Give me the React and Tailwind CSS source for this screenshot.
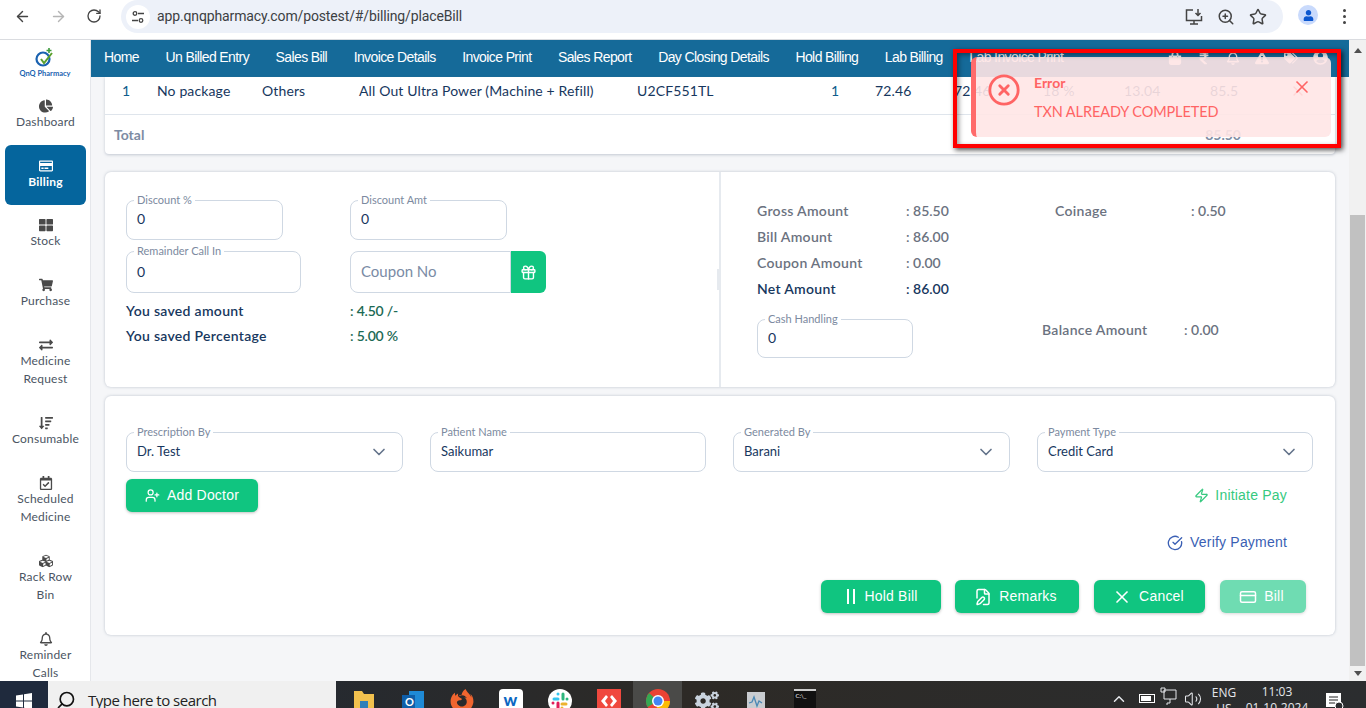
import { ArrowLeft, ArrowRight, RotateCw, Star, Search, ZoomIn, X, CircleX, ChevronDown, Gift, UserPlus, Zap, CircleCheckBig, FileEdit, CreditCard, ChevronUp, Volume2 } from 'lucide-react';
import { FaChartPie, FaRegCreditCard, FaThLarge, FaShoppingCart, FaExchangeAlt, FaSortAmountDown, FaRegCalendarCheck, FaCubes, FaRegBell, FaShoppingBag, FaRupeeSign, FaExclamationTriangle, FaTags, FaUserCircle, FaUser, FaFirefoxBrowser, FaCogs } from 'react-icons/fa';

const sideItems = [
    { icon: FaThLarge, lines: ['Stock'] },
    { icon: FaShoppingCart, lines: ['Purchase'] },
    { icon: FaExchangeAlt, lines: ['Medicine', 'Request'] },
    { icon: FaSortAmountDown, lines: ['Consumable'] },
    { icon: FaRegCalendarCheck, lines: ['Scheduled', 'Medicine'] },
    { icon: FaCubes, lines: ['Rack Row', 'Bin'] },
    { icon: FaRegBell, lines: ['Reminder', 'Calls'] },
];

const navItems = ['Home', 'Un Billed Entry', 'Sales Bill', 'Invoice Details', 'Invoice Print', 'Sales Report', 'Day Closing Details', 'Hold Billing', 'Lab Billing', 'Lab Invoice Print'];

const SideItem = ({ icon: Icon, lines, active }) => (
    <div className={`mx-[5px] w-[81px] flex flex-col items-center pt-[13px] pb-[14px] text-[12px] leading-[18px] tracking-[0.2px] ${active ? 'bg-[#05659d] rounded-md text-white font-bold' : 'text-[#4b5563]'}`}>
        <div className="h-[15px] flex items-center justify-center">
            <Icon size={14} className={active ? 'text-white' : 'text-[#4a4a4a]'} />
        </div>
        {lines.map((l) => <div key={l}>{l}</div>)}
    </div>
);

const Field = ({ label, value, className, select, valueClass }) => (
    <div className={`relative border border-[#cfd8e3] rounded-lg flex items-center justify-between pl-[10px] pr-[13px] ${className}`}>
        <span className="absolute -top-[7px] left-[7px] bg-white px-[3px] text-[11px] leading-[12px] text-[#7c8aa0]">{label}</span>
        <span className={`text-[#17375e] ${valueClass || 'text-[13px]'}`}>{value}</span>
        {select && <ChevronDown size={20} className="text-[#64748b]" />}
    </div>
);

const SummaryRow = ({ label, value, navy }) => (
    <>
        <div className={`h-[26px] leading-[26px] font-semibold tracking-[0.3px] ${navy ? 'text-[#17375e]' : 'text-[#6b7280]'}`}>{label}</div>
        <div className={`h-[26px] leading-[26px] font-semibold ${navy ? 'text-[#17375e]' : 'text-[#6b7280]'}`}>: {value}</div>
    </>
);

const GreenBtn = ({ icon, children, className }) => (
    <button className={`h-[33px] rounded-md bg-[#10c580] text-white flex items-center justify-center gap-[7px] text-[14px] tracking-[0.2px] font-['Liberation_Sans',Arial,sans-serif] shadow-[0_1px_3px_rgba(0,0,0,0.25)] ${className}`}>
        {icon}
        {children}
    </button>
);

const Logo = () => (
    <div className="h-[45px] flex flex-col items-center pt-[7px]">
        <svg width="22" height="22" viewBox="0 0 22 22" fill="none">
            <circle cx="9" cy="12" r="6.5" stroke="#1a62b0" strokeWidth="2.2" />
            <path d="M7 12l3 4 8-10" stroke="#5aa02c" strokeWidth="2" />
            <path d="M15 1v5M12.5 3.5h5" stroke="#3c9a3c" strokeWidth="1.6" />
        </svg>
        <span className="text-[7.5px] leading-[10px] font-bold text-[#1a62b0]">QnQ Pharmacy</span>
    </div>
);

const TaskIcon = ({ children, active }) => (
    <div className={`w-[49px] h-[27px] flex justify-center pt-[8px] ${active ? 'bg-[#4a4a48]' : ''}`}>{children}</div>
);

const Taskbar = () => (
    <div className="h-[27px] flex overflow-hidden bg-gradient-to-r from-[#1f2937] via-[#2d2a26] to-[#2b2d2f] shrink-0">
        <div className="w-[48px] bg-[#1f2a3d] flex justify-center pt-[12px]">
            <svg width="16" height="16" viewBox="0 0 16 16" fill="#fff"><path d="M0 2.5l7-1v6H0zM8 1.3l8-1.300v7.500H8zM0 8.500h7v6l-7-1zM8 8.500h8V16l-8-1.200z" /></svg>
        </div>
        <div className="w-[288px] bg-[#f0f0f0] flex items-start pl-[8px] pt-[9px] text-[15px] leading-[20px] text-[#222] font-['Open_Sans',sans-serif]">
            <Search size={20} className="-scale-x-100 mr-[12px] text-[#111]" />
            <span className="tracking-[-0.5px]">Type here to search</span>
        </div>
        <div className="w-[1px] ml-[1px]" />
        <div className="flex ml-[1px]">
            <TaskIcon><svg width="22" height="24" viewBox="0 0 22 24"><path d="M1 2h8l2 3h10v19H1z" fill="#f2c14e" /><rect x="7" y="12" width="8" height="8" fill="#2f7fb8" /></svg></TaskIcon>
            <TaskIcon><svg width="24" height="24" viewBox="0 0 24 24"><rect x="8" y="2" width="15" height="20" fill="#1f8ad6" /><rect x="1" y="6" width="13" height="14" fill="#0f5ea8" /><text x="4" y="17" fontSize="11" fontWeight="700" fill="#fff">O</text></svg></TaskIcon>
            <TaskIcon><FaFirefoxBrowser size={24} className="text-[#f0652f]" /></TaskIcon>
            <TaskIcon><div className="w-[24px] h-[24px] bg-white rounded-sm text-center text-[17px] leading-[22px] font-black text-[#0b67c2]">w</div></TaskIcon>
            <TaskIcon>
                <svg width="24" height="24" viewBox="0 0 24 24" fill="none" strokeWidth="3" strokeLinecap="round">
                    <circle cx="12" cy="12" r="12" fill="#fff" />
                    <path d="M6 10h4M10 5v.1" stroke="#36c5f0" />
                    <path d="M15 5v5M19 10v.1" stroke="#2eb67d" />
                    <path d="M14 15h4M14 19v.1" stroke="#ecb22e" />
                    <path d="M10 14v5M5 14v.1" stroke="#e01e5a" />
                </svg>
            </TaskIcon>
            <TaskIcon><svg width="24" height="24" viewBox="0 0 24 24"><rect width="24" height="24" fill="#f0483e" /><path d="M9 6l-5 6 5 6 2-2-3-4 3-4zM15 6l5 6-5 6-2-2 3-4-3-4z" fill="#fff" /></svg></TaskIcon>
            <TaskIcon active><svg width="24" height="24" viewBox="0 0 24 24"><circle cx="12" cy="12" r="12" fill="#ea4335" /><path d="M12 12L1.600 18A12 12 0 0 1 3 4z" fill="#34a853" /><path d="M12 12h12a12 12 0 0 1-14 11.800z" fill="#fbbc04" /><circle cx="12" cy="12" r="6" fill="#fff" /><circle cx="12" cy="12" r="4.500" fill="#4285f4" /></svg></TaskIcon>
            <TaskIcon><FaCogs size={24} className="text-[#c9d3de]" /></TaskIcon>
            <TaskIcon><svg width="24" height="24" viewBox="0 0 24 24"><rect x="3" y="3" width="18" height="20" fill="#c9ccd0" /><path d="M5 14l3-1 2-5 3 9 2-5 3 2" stroke="#4a88b5" strokeWidth="1.300" fill="none" /></svg></TaskIcon>
            <TaskIcon><div className="w-[22px] h-[24px] bg-[#111] border-t-[2px] border-[#ccc] text-[6px] leading-[10px] text-white pl-[2px]">C:\_</div></TaskIcon>
        </div>
        <div className="ml-auto flex items-start text-[#e5e7eb] font-['Open_Sans',sans-serif] text-[12px]">
            <ChevronUp size={18} className="mt-[9px] mr-[11px]" />
            <div className="w-[16px] h-[9px] mt-[13px] mr-[5px] border border-white p-[1px]"><div className="h-full w-[10px] bg-white" /></div>
            <svg width="17" height="18" viewBox="0 0 17 18" fill="none" stroke="#e5e7eb" className="mt-[6px] mr-[7px]"><path d="M4 3h12v9H4zM1 1h4v4H1zM10 12v4H7v2" /></svg>
            <Volume2 size={18} strokeWidth={1.400} className="mt-[9px] mr-[6px]" />
            <div className="w-[32px] flex flex-col items-center pt-[4px] leading-[16px]"><span>ENG</span><span>US</span></div>
            <div className="w-[76px] -ml-[1px] flex flex-col items-center pt-[3px] leading-[16px]"><span>11:03</span><span>01-10-2024</span></div>
            <div className="w-[27px] mr-[19px] ml-[5px] pt-[12px] flex justify-center">
                <svg width="20" height="16" viewBox="0 0 20 16"><path d="M2 0h15v14H2z" fill="#fff" /><path d="M5 4h9M5 7h9M5 10h6" stroke="#222" /><circle cx="15" cy="13" r="4" fill="#2b2d2f" stroke="#fff" /></svg>
            </div>
        </div>
    </div>
);

const TopBar = () => (
    <div className="h-[40px] bg-white border-b border-[#dadce0] flex items-start shrink-0 font-['Roboto',sans-serif]">
        <ArrowLeft size={17} className="mt-[8px] ml-[14px] text-[#444]" />
        <ArrowRight size={17} className="mt-[8px] ml-[19px] text-[#b5b5b5]" />
        <RotateCw size={16} className="mt-[8px] ml-[19px] text-[#444]" />
        <div className="ml-[19px] w-[1162px] h-[33px] rounded-full bg-[#edf1f9] flex items-center pl-[5px]">
            <div className="w-[24px] h-[24px] rounded-full bg-white flex items-center justify-center">
                <svg width="14" height="14" viewBox="0 0 14 14" fill="none" stroke="#444" strokeWidth="1.300"><circle cx="4" cy="3.500" r="1.800" /><path d="M7 3.500h6M1 10.500h6" /><circle cx="10" cy="10.500" r="1.800" /></svg>
            </div>
            <span className="ml-[7px] text-[14px] text-[#3c4043] tracking-[-0.13px]">app.qnqpharmacy.com/postest/#/billing/placeBill</span>
            <div className="ml-auto flex items-center gap-[14px] pr-[16px] text-[#444]">
                <svg width="18" height="18" viewBox="0 0 18 18" fill="none" stroke="#444" strokeWidth="1.500"><path d="M8 2H1.500v10.500h15V8M5 16h8M9 12.500V16M13 1v6M10.500 5L13 7.500 15.500 5" /></svg>
                <ZoomIn size={18} className="text-[#444]" />
                <Star size={18} className="text-[#444]" />
            </div>
        </div>
        <div className="ml-[15px] mt-[5px] w-[20px] h-[20px] rounded-full bg-[#c9dafc] flex items-center justify-center"><FaUser size={11} className="text-[#0b57d0]" /></div>
        <div className="ml-[25px] mt-[9px] flex flex-col gap-[3px]"><i className="w-[3px] h-[3px] rounded-full bg-[#444]" /><i className="w-[3px] h-[3px] rounded-full bg-[#444]" /><i className="w-[3px] h-[3px] rounded-full bg-[#444]" /></div>
    </div>
);

const App = () => {
    return (
        <div className="relative w-[1366px] h-[708px] overflow-hidden flex flex-col bg-[#f5f6f8] font-['Lato',sans-serif] text-[14px]">
            <TopBar />

            <div className="flex flex-1 min-h-0">
                {/* Sidebar */}
                <div className="w-[91px] bg-white border-r border-[#e5e7eb] shrink-0 overflow-hidden">
                    <Logo />
                    <SideItem icon={FaChartPie} lines={['Dashboard']} />
                    <SideItem icon={FaRegCreditCard} lines={['Billing']} active />
                    <div className="-mt-[1px]">
                        {sideItems.map((it) => <SideItem key={it.lines[0]} {...it} />)}
                    </div>
                </div>

                {/* Main */}
                <div className="flex-1 min-w-0 flex flex-col">
                    <div className="h-[37px] bg-[#156a99] shrink-0 flex items-center pl-[13px] pb-[2px] text-white font-['Liberation_Sans',Arial,sans-serif] text-[14px] tracking-[-0.6px]">
                        <div className="flex gap-[26.5px] whitespace-nowrap">
                            {navItems.map((n) => <span key={n}>{n}</span>)}
                        </div>
                        <div className="ml-[105px] flex items-center gap-[15px] text-[#f3f4f6]">
                            <FaShoppingBag size={14} />
                            <FaRupeeSign size={14} />
                            <FaRegBell size={14} />
                            <FaExclamationTriangle size={14} />
                            <FaTags size={14} />
                            <FaUserCircle size={15} />
                        </div>
                    </div>

                    <div className="px-[14px] flex-1 min-h-0">
                        {/* Table */}
                        <div className="bg-white h-[77px] rounded-b shadow-[0_1px_3px_rgba(100,116,139,0.35)]">
                            <div className="h-[38px] pb-[10px] border-b border-[#dfe5ec] grid grid-cols-[35px_105px_97px_278px_194px_44px_79px_89px_81px_86px_80px_20px] pl-[17px] items-center text-[#17375e] whitespace-nowrap tracking-[0.13px]">
                                <span className="text-[#0f5c8c]">1</span>
                                <span>No package</span>
                                <span>Others</span>
                                <span>All Out Ultra Power (Machine + Refill)</span>
                                <span>U2CF551TL</span>
                                <span className="text-[#0f5c8c]">1</span>
                                <span>72.46</span>
                                <span>72.46</span>
                                <span>18 %</span>
                                <span>13.04</span>
                                <span>85.5</span>
                                <X size={16} className="text-[#ef4444]" />
                            </div>
                            <div className="h-[39px] pb-[1px] flex items-center justify-between pl-[9px] pr-[94px] font-bold text-[#7d8ca3]">
                                <span>Total</span>
                                <span>85.50</span>
                            </div>
                        </div>

                        {/* Discounts and amounts */}
                        <div className="mt-[18px] h-[215px] bg-white rounded-md shadow-[0_0_3px_rgba(100,116,139,0.4)] flex">
                            <div className="w-[614px] pl-[21px] pt-[28px]">
                                <div className="flex gap-[67px]">
                                    <Field label="Discount %" value="0" className="w-[157px] h-[40px]" valueClass="text-[14px] -mt-[4px]" />
                                    <Field label="Discount Amt" value="0" className="w-[157px] h-[40px]" valueClass="text-[14px] -mt-[4px]" />
                                </div>
                                <div className="flex mt-[11px] gap-[49px]">
                                    <Field label="Remainder Call In" value="0" className="w-[175px] h-[42px]" valueClass="text-[14px] -mt-[2px]" />
                                    <div className="flex h-[42px]">
                                        <div className="w-[161px] border border-[#cfd8e3] rounded-l-lg flex items-center pl-[10px] pb-[2px] text-[15px] text-[#7a8ba5]">Coupon No</div>
                                        <div className="w-[35px] bg-[#10c580] rounded-r-md flex items-center justify-center"><Gift size={17} className="text-white" /></div>
                                    </div>
                                </div>
                                <div className="mt-[5px] grid grid-cols-[224px_auto] font-semibold leading-[25px] text-[#17375e]">
                                    <span className="tracking-[0.3px]">You saved amount</span><span className="text-[#1c6a55] tracking-[-0.2px]">: 4.50 /-</span>
                                    <span className="tracking-[0.3px]">You saved Percentage</span><span className="text-[#1c6a55] tracking-[-0.2px]">: 5.00 %</span>
                                </div>
                            </div>

                            <div className="relative w-[2px] bg-[#e6eaef]">
                                <div className="absolute left-[-2px] top-[97px] w-[3px] h-[21px] bg-[#e6eaef]" />
                            </div>

                            <div className="pl-[36px] pt-[26px]">
                                <div className="grid grid-cols-[149px_149px_136px_auto]">
                                    <SummaryRow label="Gross Amount" value="85.50" />
                                    <SummaryRow label="Coinage" value="0.50" />
                                    <SummaryRow label="Bill Amount" value="86.00" />
                                    <span /><span />
                                    <SummaryRow label="Coupon Amount" value="0.00" />
                                    <span /><span />
                                    <SummaryRow label="Net Amount" value="86.00" navy />
                                    <span /><span />
                                </div>
                                <div className="flex mt-[15px] items-start">
                                    <Field label="Cash Handling" value="0" className="w-[156px] h-[39px] mt-[2px]" valueClass="text-[14px] -mt-[2px]" />
                                    <div className="ml-[129px] w-[142px] leading-[26px] font-semibold tracking-[0.3px] text-[#6b7280]">Balance Amount</div>
                                    <div className="leading-[26px] font-semibold text-[#6b7280]">: 0.00</div>
                                </div>
                            </div>
                        </div>

                        {/* Patient and payment */}
                        <div className="mt-[9px] h-[239px] bg-white rounded-md shadow-[0_0_3px_rgba(100,116,139,0.4)] pt-[36px] pl-[21px]">
                            <div className="grid grid-cols-[277px_276px_277px_276px] gap-[27px]">
                                <Field label="Prescription By" value="Dr. Test" className="h-[40px]" select />
                                <Field label="Patient Name" value="Saikumar" className="h-[40px]" />
                                <Field label="Generated By" value="Barani" className="h-[40px]" select />
                                <Field label="Payment Type" value="Credit Card" className="h-[40px]" select />
                            </div>
                            <div className="mt-[7px] flex justify-between pr-[48px] font-['Liberation_Sans',Arial,sans-serif]">
                                <GreenBtn className="w-[132px]" icon={<UserPlus size={15} />}>Add Doctor</GreenBtn>
                                <div className="flex items-center gap-[6px] text-[14px] tracking-[0.2px] text-[#36c97f]"><Zap size={15} />Initiate Pay</div>
                            </div>
                            <div className="mt-[22px] pr-[48px] h-[17px] flex justify-end items-center gap-[7px] text-[14px] tracking-[0.2px] text-[#3a5fb4] font-['Liberation_Sans',Arial,sans-serif]">
                                <CircleCheckBig size={16} />Verify Payment
                            </div>
                            <div className="mt-[29px] pr-[29px] flex justify-end gap-[15px]">
                                <GreenBtn className="w-[120px] pl-[3px]" icon={<span className="w-[8px] h-[15px] border-x-2 border-white mr-[2px]" />}>Hold Bill</GreenBtn>
                                <GreenBtn className="w-[124px] -ml-[1px] pr-[3px]" icon={<FileEdit size={18} />}>Remarks</GreenBtn>
                                <GreenBtn className="w-[111px] pr-[3px]" icon={<X size={20} />}>Cancel</GreenBtn>
                                <GreenBtn className="w-[86px] pr-[3px] opacity-60" icon={<CreditCard size={18} />}>Bill</GreenBtn>
                            </div>
                        </div>
                    </div>
                </div>

                {/* Scrollbar */}
                <div className="w-[17px] bg-[#f1f1f1] shrink-0 flex flex-col items-center pt-[8px] pb-[5px]">
                    <div className="w-0 h-0 border-x-[4px] border-x-transparent border-b-[5px] border-b-[#505050]" />
                    <div className="mt-[162px] flex-1 w-[15px] bg-[#c1c1c1]" />
                    <div className="mt-[5px] w-0 h-0 border-x-[4px] border-x-transparent border-t-[5px] border-t-[#505050]" />
                </div>
            </div>

            <Taskbar />

            {/* Error toast, with the red annotation frame over it */}
            <div className="absolute left-[971px] top-[57px] w-[360px] h-[80px] rounded-md border-l-[5px] border-[#ff6b6b] bg-[#ffe5e5]/90 flex items-start text-[#ff6464]">
                <CircleX size={34} strokeWidth={2} className="mt-[16px] ml-[11px]" />
                <div className="ml-[13px] pt-[17px]">
                    <div className="font-bold leading-[18px]">Error</div>
                    <div className="mt-[11px] text-[14.5px] leading-[18px] tracking-[-0.1px]">TXN ALREADY COMPLETED</div>
                </div>
                <X size={20} className="absolute right-[19px] top-[20px]" />
            </div>
            <div className="absolute left-[953px] top-[49px] w-[388px] h-[99px] border-[4px] border-[#f00] shadow-[2px_2px_5px_rgba(0,0,0,0.7),inset_2px_2px_5px_rgba(0,0,0,0.4)]" />
        </div>
    );
};

export default App;
